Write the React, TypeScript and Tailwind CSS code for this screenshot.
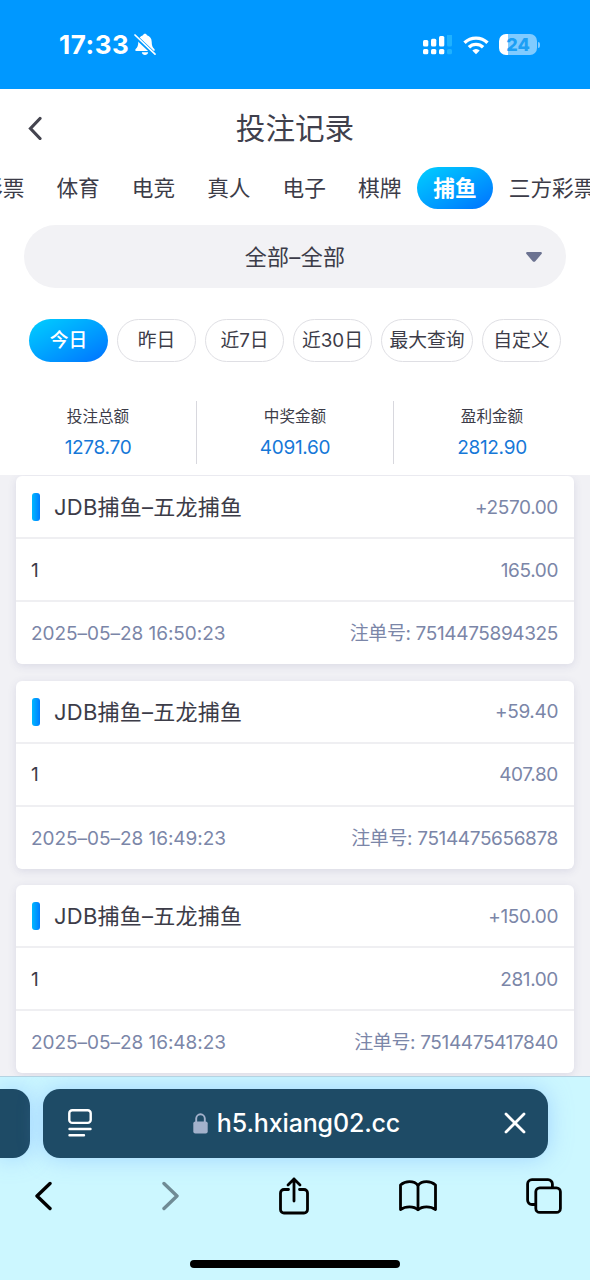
import React from 'react';

interface Bet {
  id: string;
  name: string;
  win: string;
  count: string;
  amount: string;
  time: string;
}

const tabs = ['彩票', '体育', '电竞', '真人', '电子', '棋牌', '捕鱼', '三方彩票'];
const activeTab = '捕鱼';

const ranges = ['今日', '昨日', '近7日', '近30日', '最大查询', '自定义'];
const activeRange = '今日';

const totals = [
  { label: '投注总额', value: '1278.70' },
  { label: '中奖金额', value: '4091.60' },
  { label: '盈利金额', value: '2812.90' },
];

const bets: Bet[] = [
  { id: '7514475894325', name: 'JDB捕鱼–五龙捕鱼', win: '+2570.00', count: '1', amount: '165.00', time: '2025–05–28 16:50:23' },
  { id: '7514475656878', name: 'JDB捕鱼–五龙捕鱼', win: '+59.40', count: '1', amount: '407.80', time: '2025–05–28 16:49:23' },
  { id: '7514475417840', name: 'JDB捕鱼–五龙捕鱼', win: '+150.00', count: '1', amount: '281.00', time: '2025–05–28 16:48:23' },
];

const StatusBar = () => (
  <div className="flex h-[89px] shrink-0 items-start justify-between bg-[#0098ff] pl-[59px] pr-[50px] pt-[29px] text-white">
    <div className="flex h-[31px] items-center">
      <span className="text-[26px] font-bold leading-[31px] tracking-[0.5px]">17:33</span>
      {/* Silent bell */}
      <svg width="22" height="23" viewBox="0 0 22 23" className="ml-[5px]">
        <path d="M11 .8c-1 0-1.800.6-2 1.500C6 3.200 4.300 5.600 4.300 8.800c0 4-.9 5.600-2.600 7.200-.8.8-.7 1.900.7 1.900h17.200c1.400 0 1.500-1.100.7-1.900-1.700-1.600-2.600-3.200-2.600-7.200 0-3.200-1.700-5.600-4.700-6.500C12.800 1.400 12 .8 11 .8z" fill="#fff" />
        <path d="M7.800 19.200h6.400c-.3 1.700-1.600 2.800-3.200 2.800s-2.900-1.100-3.200-2.800z" fill="#fff" />
        <path d="M.5 2.500 20.700 21.500" stroke="#0098ff" strokeWidth="4" />
        <path d="M1 2 21 21.200" stroke="#fff" strokeWidth="1.700" strokeLinecap="round" />
      </svg>
    </div>
    <div className="flex h-[31px] items-center">
      <svg width="30" height="20" viewBox="0 0 30 20">
        <g fill="#fff">
          <rect x="0" y="5" width="5.300" height="6.500" rx="1.500" />
          <rect x="8" y="3.800" width="5.300" height="7.700" rx="1.500" />
          <rect x="16" y="1" width="5.300" height="10.500" rx="1.500" />
          <rect x="0" y="14" width="5.300" height="5.300" rx="1.500" />
          <rect x="8" y="14" width="5.300" height="5.300" rx="1.500" />
          <rect x="16" y="14" width="5.300" height="5.300" rx="1.500" />
        </g>
        <g fill="#1fb2ff">
          <rect x="24" y="-1" width="5" height="12.500" rx="1.500" />
          <rect x="24" y="14" width="5" height="5.300" rx="1.500" />
        </g>
      </svg>
      <svg width="26" height="20" viewBox="0 0 26 20" className="ml-[10px]" fill="none" stroke="#fff" strokeWidth="3.400">
        <path d="M1.500 7.800a16.500 16.500 0 0 1 23 0" />
        <path d="M5.900 12.300a10.200 10.200 0 0 1 14.200 0" />
        <path d="M13 19.300 9.300 15.600a5.300 5.300 0 0 1 7.400 0z" fill="#fff" stroke="none" />
      </svg>
      <div className="ml-[10px] flex h-[21px] w-[38px] items-center justify-center rounded-[7px] bg-linear-to-r from-white from-24% to-[#80cbff] to-24% text-[18px] font-extrabold leading-[21px] text-[#1c9ff5]">
        24
      </div>
      <div className="ml-px h-[6px] w-[2px] rounded-r-full bg-[#80cbff]" />
    </div>
  </div>
);

const Header = () => (
  <div className="grid h-[78px] shrink-0 grid-cols-[1fr_auto_1fr] items-center px-[27px]">
    <svg width="16" height="24" viewBox="0 0 16 24" fill="none" stroke="#44444f" strokeWidth="3.200">
      <path d="M13 2.500 3.500 12.500l9.500 10" strokeLinecap="round" />
    </svg>
    <h1 className="text-[29.600px] leading-[40px] text-[#40404c]">投注记录</h1>
  </div>
);

const Tabs = () => (
  <div className="flex h-[42px] shrink-0 overflow-hidden">
    <div className="-ml-[35px] flex shrink-0">
      {tabs.map((tab) => (
        <button
          key={tab}
          className={`h-[42px] shrink-0 whitespace-nowrap rounded-full px-4 text-[21.700px] leading-[42px] ${
            tab === activeTab
              ? 'bg-linear-to-br from-[#00cfff] to-[#0070ff] font-bold text-white'
              : 'text-[#3c3c48]'
          }`}
        >
          {tab}
        </button>
      ))}
    </div>
  </div>
);

const BetCard = ({ bet }: { bet: Bet }) => (
  <div className="flex h-[188px] shrink-0 flex-col rounded-[6px] bg-white text-[19px] leading-[28px] text-[#7b86a8] shadow-[0_2px_8px_rgba(70,70,130,0.13)]">
    <div className="flex h-[63px] items-center border-b-2 border-[#efeff2] px-4 pt-px">
      <span className="h-7 w-2 rounded-[3px] bg-linear-to-r from-[#00b8ff] to-[#007cff]" />
      <span className="ml-[14px] text-[22px] leading-[30px] tracking-[0.25px] text-[#3c3c48]">{bet.name}</span>
      <span className="ml-auto pt-px tracking-[-0.37px]">{bet.win}</span>
    </div>
    <div className="flex h-[63px] items-center justify-between border-b-2 border-[#efeff2] pl-[15px] pr-4 pt-[2px]">
      <span className="text-[#3c3c48]">{bet.count}</span>
      <span className="tracking-[-0.37px]">{bet.amount}</span>
    </div>
    <div className="flex h-[62px] items-center justify-between pl-[15px] pr-4 pt-[2px]">
      <span className="tracking-[-0.04px]">{bet.time}</span>
      <span className="tracking-[-0.37px]">注单号: {bet.id}</span>
    </div>
  </div>
);

const BrowserBar = () => (
  <div className="flex h-[204px] shrink-0 flex-col overflow-hidden border-t border-[#b4d3e2] bg-[#ccf7ff]">
    {/* Address bar, with the edge of the previous tab */}
    <div className="mt-[11.500px] flex h-[69.500px] shrink-0 gap-[12.500px]">
      <div className="w-[30px] rounded-r-[17px] bg-[#1e4b66] shadow-[0_0_22px_rgba(120,180,255,0.5)]" />
      <div className="flex w-[505px] items-center rounded-[17px] bg-[#1e4b66] pl-[25px] pr-[22px] text-white shadow-[0_0_22px_rgba(120,180,255,0.5)]">
        <svg width="24" height="28" viewBox="0 0 24 28" fill="none" stroke="#fff" strokeWidth="2.400" strokeLinecap="round">
          <rect x="1.300" y="1.300" width="21.400" height="12.600" rx="3" />
          <path d="M1.500 20h21M1.500 26.300h14.500" />
        </svg>
        <div className="flex flex-1 items-center justify-center pr-[2px]">
          <svg width="15" height="21" viewBox="0 0 15 21">
            <path d="M3.200 10V5.600a4.300 4.300 0 0 1 8.600 0V10" fill="none" stroke="#a3b1cb" strokeWidth="1.900" />
            <rect x="0.300" y="8.500" width="14.400" height="12" rx="2" fill="#a3b1cb" />
          </svg>
          <span className="ml-[9px] text-[25px] font-medium leading-[32px] tracking-[-0.15px]">h5.hxiang02.cc</span>
        </div>
        <svg width="22" height="22" viewBox="0 0 22 22" stroke="#fff" strokeWidth="2.800" strokeLinecap="round">
          <path d="M2 2l18 18M20 2 2 20" />
        </svg>
      </div>
    </div>
    <div className="flex h-[75px] shrink-0 items-center justify-between pl-[34px] pr-[28px]">
      <svg width="18" height="30" viewBox="0 0 18 30" fill="none" stroke="#000" strokeWidth="3.400" strokeLinecap="round" strokeLinejoin="round">
        <path d="M16 2.500 3 15l13 12.500" />
      </svg>
      <svg width="18" height="30" viewBox="0 0 18 30" fill="none" stroke="#6f8b95" strokeWidth="3.400" strokeLinecap="round" strokeLinejoin="round" className="ml-[21px]">
        <path d="M2 2.500 15 15 2 27.500" />
      </svg>
      <svg width="30" height="38" viewBox="0 0 30 38" fill="none" stroke="#000" strokeWidth="2.800" strokeLinecap="round" strokeLinejoin="round" className="ml-[10px] mr-[2px]">
        <path d="M9.500 12.500H5A3.500 3.500 0 0 0 1.500 16v16.500A3.500 3.500 0 0 0 5 36h20a3.500 3.500 0 0 0 3.500-3.500V16a3.500 3.500 0 0 0-3.500-3.500h-4.500" />
        <path d="M15 24V2M9 8 15 2 21 8" />
      </svg>
      <svg width="38" height="32" viewBox="0 0 38 32" fill="none" stroke="#000" strokeWidth="2.800" strokeLinecap="round" strokeLinejoin="round">
        <path d="M19 5.500C17 2.800 14 1.700 10.500 1.700c-3.500 0-6.500 1.100-9 3.300v24.500c2.500-1.800 5.500-2.700 9-2.700s6.500 1 8.500 3c2-2 5-3 8.500-3s6.500.9 9 2.700V5c-2.500-2.200-5.500-3.300-9-3.300S21 2.800 19 5.500z" />
        <path d="M19 5.500v24" />
      </svg>
      <svg width="36" height="36" viewBox="0 0 36 36" fill="none" stroke="#000" strokeWidth="2.800">
        <rect x="9.800" y="9.800" width="24.600" height="24.600" rx="4" />
        <path d="M9.800 26.500H6A4.400 4.400 0 0 1 1.600 22V6A4.400 4.400 0 0 1 6 1.600h16A4.400 4.400 0 0 1 26.400 6v3.800" />
      </svg>
    </div>
    <div className="mx-auto mt-[27px] h-[8px] w-[210px] shrink-0 rounded-full bg-black" />
  </div>
);

export default function App() {
  return (
    <div className="flex h-[1280px] w-[590px] flex-col overflow-hidden bg-white font-['Inter','Noto_Sans_CJK_SC',sans-serif]">
      <StatusBar />
      <Header />
      <Tabs />

      {/* Game filter */}
      <div className="mx-6 mt-4 grid h-[63px] shrink-0 grid-cols-[1fr_auto_1fr] items-center rounded-full bg-[#f2f2f5] px-6">
        <span className="col-start-2 text-[22px] leading-[30px] tracking-[0.3px] text-[#3c3c48]">全部–全部</span>
        <svg width="16" height="10" viewBox="0 0 16 10" className="justify-self-end">
          <path d="M1.500 0h13c1.300 0 1.800 1.200 1 2.100L9.300 9.200c-.8.900-1.800.9-2.600 0L.5 2.100C-.3 1.200.2 0 1.500 0z" fill="#6c7391" />
        </svg>
      </div>

      {/* Date range */}
      <div className="mt-[31px] flex h-[43px] shrink-0 gap-[9px] px-[29px]">
        {ranges.map((range) => (
          <button
            key={range}
            className={`whitespace-nowrap rounded-full pt-px text-[18.800px] leading-[38px] ${
              range === '最大查询' ? 'w-[92px]' : 'w-[79px]'
            } ${
              range === activeRange
                ? 'bg-linear-to-br from-[#00cfff] to-[#0070ff] font-medium text-white'
                : 'border-[1.500px] border-[#dfdfe4] text-[#3c3c48]'
            }`}
          >
            {range}
          </button>
        ))}
      </div>

      {/* Totals */}
      <div className="mt-[39px] flex h-[63px] shrink-0 divide-x divide-[#d8d8de]">
        {totals.map((item) => (
          <div key={item.label} className="flex flex-1 flex-col items-center">
            <span className="mt-[6px] text-[15.600px] leading-[20px] text-[#3c3c48]">{item.label}</span>
            <span className="mt-[8px] text-[19px] leading-[26px] tracking-[-0.3px] text-[#1678d8]">{item.value}</span>
          </div>
        ))}
      </div>

      {/* Bet list */}
      <div className="mt-[11px] flex min-h-0 flex-1 flex-col gap-[16.500px] overflow-hidden bg-[#f1f1f5] px-4 pt-px">
        {bets.map((bet) => (
          <BetCard key={bet.id} bet={bet} />
        ))}
      </div>

      <BrowserBar />
    </div>
  );
}
